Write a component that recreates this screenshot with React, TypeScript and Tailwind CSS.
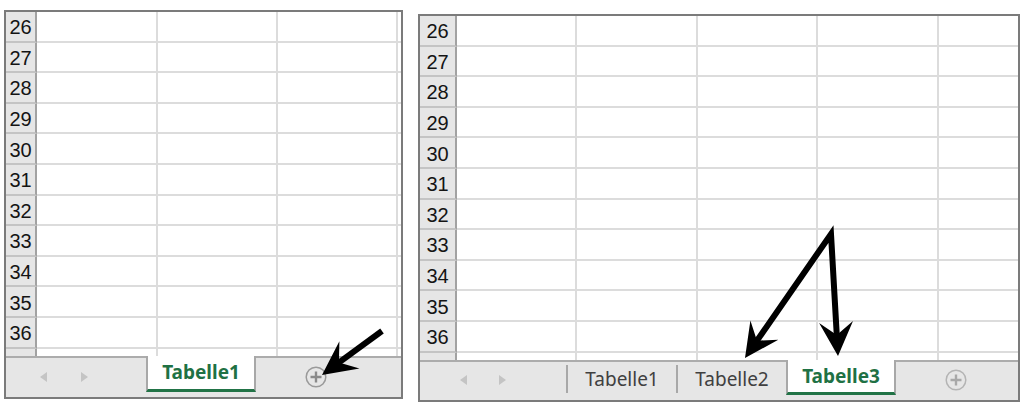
import React from "react";

type P = [number, number];

const ROWS = [26, 27, 28, 29, 30, 31, 32, 33, 34, 35, 36, 0];

function fmt(pts: P[]) {
  return pts.map((p) => p[0].toFixed(1) + "," + p[1].toFixed(1)).join(" ");
}

// arrow head: tip + direction back toward the tail
function head(tip: P, from: P, L = 34, W = 17, N = 21) {
  const dx = from[0] - tip[0];
  const dy = from[1] - tip[1];
  const len = Math.hypot(dx, dy);
  const ux = dx / len;
  const uy = dy / len;
  const px = -uy;
  const py = ux;
  return fmt([
    tip,
    [tip[0] + L * ux + W * px, tip[1] + L * uy + W * py],
    [tip[0] + N * ux, tip[1] + N * uy],
    [tip[0] + L * ux - W * px, tip[1] + L * uy - W * py],
  ]);
}

function back(tip: P, from: P, d = 17): P {
  const dx = from[0] - tip[0];
  const dy = from[1] - tip[1];
  const len = Math.hypot(dx, dy);
  return [tip[0] + (dx / len) * d, tip[1] + (dy / len) * d];
}

function Arrows() {
  const tail: P = [382, 331];
  const tip1: P = [322, 375];
  const apex: P = [831, 234];
  const tipA: P = [745, 358];
  const tipB: P = [838, 356];
  return (
    <svg
      className="absolute inset-0 pointer-events-none"
      width={1024}
      height={408}
      viewBox="0 0 1024 408"
    >
      <line
        x1={tail[0]}
        y1={tail[1]}
        x2={back(tip1, tail)[0]}
        y2={back(tip1, tail)[1]}
        stroke="#000"
        strokeWidth={6}
      />
      <polygon points={head(tip1, tail)} fill="#000" />
      <polyline
        points={fmt([back(tipA, apex), apex, back(tipB, apex)])}
        fill="none"
        stroke="#000"
        strokeWidth={6}
        strokeLinejoin="miter"
      />
      <polygon points={head(tipA, apex)} fill="#000" />
      <polygon points={head(tipB, apex)} fill="#000" />
    </svg>
  );
}

function Grid({ headerW, cols }: { headerW: string; cols: string[] }) {
  return (
    <div className="flex-1 overflow-hidden">
      {ROWS.map((n, i) => (
        <div key={i} className="flex h-[30.6px]">
          <div
            className={`${headerW} shrink-0 bg-[#e6e6e6] border-r-2 border-b-2 border-r-[#a2a2a2] border-b-[#c4c4c4] flex items-center justify-center pt-[2px] text-[20px] leading-none text-[#141414] font-['Liberation_Sans',Arial,sans-serif]`}
          >
            {n ? n : ""}
          </div>
          {cols.map((w, j) => (
            <div
              key={j}
              className={`${w} shrink-0 border-r-2 border-b-2 border-[#dcdcdc]`}
            />
          ))}
          <div className="flex-1 border-b-2 border-[#dcdcdc]" />
        </div>
      ))}
    </div>
  );
}

function Tri({ dir }: { dir: "l" | "r" }) {
  return (
    <svg width="7" height="10" viewBox="0 0 7 10">
      <polygon
        points={dir === "l" ? "7,0 7,10 0,5" : "0,0 0,10 7,5"}
        fill="#c4c4c4"
      />
    </svg>
  );
}

function Plus({ light }: { light?: boolean }) {
  const ring = light ? "#b4b4b4" : "#9a9a9a";
  const bar = light ? "#a8a8a8" : "#8a8a8a";
  return (
    <svg width="22" height="22" viewBox="0 0 22 22">
      <circle cx="11" cy="11" r="9.8" fill="none" stroke={ring} strokeWidth="1.5" />
      <path d="M11 5.5v11M5.5 11h11" stroke={bar} strokeWidth="2.4" />
    </svg>
  );
}

function ActiveTab({ label }: { label: string }) {
  return (
    <div className="w-[110px] shrink-0 -mt-[2px] mb-[5px] bg-white border-x-2 border-[#a8a8a8] border-b-[3px] border-b-[#217346] flex items-center justify-center text-[19px] font-bold text-[#1f7144] font-['Noto_Sans',sans-serif]">
      {label}
    </div>
  );
}

function Tab({ label }: { label: string }) {
  return (
    <>
      <div className="w-[2px] shrink-0 bg-[#a8a8a8] mt-[3px] mb-[7px]" />
      <div className="w-[108px] shrink-0 flex items-center justify-center pb-[3px] text-[19px] text-[#404040] font-['Noto_Sans',sans-serif]">
        {label}
      </div>
    </>
  );
}

export default function App() {
  return (
    <div className="relative flex items-start w-[1024px] h-[408px] bg-white overflow-hidden">
      {/* left sheet */}
      <div className="ml-[4px] mt-[10px] w-[399px] h-[389px] border-2 border-[#7b7b7b] flex flex-col">
        <Grid headerW="w-[31px]" cols={["w-[121px]", "w-[120px]", "w-[120px]"]} />
        <div className="h-[41px] shrink-0 border-t-2 border-[#acacac] bg-[#e6e6e6] flex items-stretch">
          <div className="w-[140px] shrink-0 flex items-center pl-[34px] gap-[34px] pb-[2px]">
            <Tri dir="l" />
            <Tri dir="r" />
          </div>
          <ActiveTab label="Tabelle1" />
          <div className="pl-[49px] flex items-center pb-[2px]">
            <Plus />
          </div>
        </div>
      </div>

      {/* right sheet */}
      <div className="ml-[15px] mt-[14px] w-[602px] h-[388px] border-2 border-[#7b7b7b] flex flex-col">
        <Grid
          headerW="w-[37px]"
          cols={["w-[120px]", "w-[121px]", "w-[120px]", "w-[121px]"]}
        />
        <div className="h-[40px] shrink-0 border-t-2 border-[#acacac] bg-[#e6e6e6] flex items-stretch">
          <div className="w-[146px] shrink-0 flex items-center pl-[40px] gap-[32px] pb-[2px]">
            <Tri dir="l" />
            <Tri dir="r" />
          </div>
          <Tab label="Tabelle1" />
          <Tab label="Tabelle2" />
          <ActiveTab label="Tabelle3" />
          <div className="pl-[49px] flex items-center pb-[2px]">
            <Plus light />
          </div>
        </div>
      </div>

      <Arrows />
    </div>
  );
}
